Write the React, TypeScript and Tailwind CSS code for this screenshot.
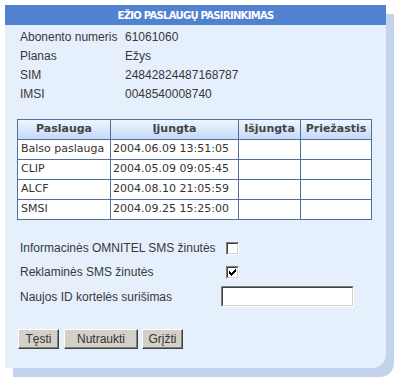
import React from "react";

const services = [
  { name: "Balso paslauga", on: "2004.06.09 13:51:05" },
  { name: "CLIP", on: "2004.05.09 09:05:45" },
  { name: "ALCF", on: "2004.08.10 21:05:59" },
  { name: "SMSI", on: "2004.09.25 15:25:00" },
];

const info = [
  ["Abonento numeris", "61061060"],
  ["Planas", "Ežys"],
  ["SIM", "24842824487168787"],
  ["IMSI", "0048540008740"],
];

const Checkbox = ({ checked }: { checked?: boolean }) => (
  <div className="ml-[5px] flex h-[13px] w-[13px] items-center justify-center border border-t-[#808080] border-l-[#808080] border-r-white border-b-white">
    <div className="flex h-[11px] w-[11px] items-center justify-center border border-t-[#404040] border-l-[#404040] border-r-[#d4d0c8] border-b-[#d4d0c8] bg-white">
      {checked && (
        <svg width="7" height="7" viewBox="0 0 7 7">
          <path d="M0 2h1v1h1v1h1V3h1V2h1V1h1V0h1v3H6v1H5v1H4v1H3v1H2V6H1V5H0z" fill="#000" />
        </svg>
      )}
    </div>
  </div>
);

const Button = ({ label, width }: { label: string; width: string }) => (
  <button
    type="button"
    className={`${width} h-[20px] border border-t-white border-l-white border-r-[#404040] border-b-[#404040] bg-[#d4d0c8] text-[12px] leading-none text-[#333] shadow-[inset_-1px_-1px_0_#808080]`}
  >
    {label}
  </button>
);

export default function App() {
  return (
    <div className="h-[385px] w-[401px] bg-white pt-[5px] pl-[5px] font-['Liberation_Sans',Arial,sans-serif] text-[12px] text-[#383838]">
      <div className="flex h-[363px] w-[381px] flex-col rounded-br-[14px] bg-[#e6f0fd] shadow-[8px_9px_0_#c3d3eb]">
        <div className="flex h-[20px] items-center justify-center bg-[#5182d1] font-['DejaVu_Sans',Verdana,sans-serif] text-[10px] font-bold tracking-[-0.7px] text-white">
          EŽIO PASLAUGŲ PASIRINKIMAS
        </div>

        <div className="pt-[2px] pl-[15px]">
          {info.map(([label, value]) => (
            <div key={label} className="flex h-[19px] items-center">
              <div className="w-[105px]">{label}</div>
              <div>{value}</div>
            </div>
          ))}
        </div>

        <table className="mt-[16px] ml-[12px] w-[355px] border-collapse font-['DejaVu_Sans',Verdana,sans-serif] text-[11px] text-[#333]">
          <thead>
            <tr className="h-[20px] bg-gradient-to-b from-[#eef5ff] to-[#c3d8f7]">
              <th className="w-[93px] border border-[#50709a] font-bold text-[#444]">Paslauga</th>
              <th className="w-[128px] border border-[#50709a] font-bold text-[#444]">Įjungta</th>
              <th className="w-[62px] border border-[#50709a] font-bold text-[#444]">Išjungta</th>
              <th className="border border-[#50709a] font-bold text-[#444]">Priežastis</th>
            </tr>
          </thead>
          <tbody>
            {services.map((s) => (
              <tr key={s.name} className="h-[20px] bg-white">
                <td className="border border-[#50709a] pl-[3px] whitespace-nowrap">{s.name}</td>
                <td className="border border-[#50709a] pl-[2px] whitespace-nowrap">{s.on}</td>
                <td className="border border-[#50709a]"></td>
                <td className="border border-[#50709a]"></td>
              </tr>
            ))}
          </tbody>
        </table>

        <div className="mt-[16px] pl-[15px]">
          <div className="flex h-[24px] items-center">
            <div className="w-[201px]">Informacinės OMNITEL SMS žinutės</div>
            <Checkbox />
          </div>
          <div className="flex h-[24px] items-center">
            <div className="w-[201px]">Reklaminės SMS žinutės</div>
            <Checkbox checked />
          </div>
          <div className="flex h-[25px] items-center">
            <div className="w-[201px]">Naujos ID kortelės surišimas</div>
            <div className="h-[21px] w-[133px] border border-t-[#808080] border-l-[#808080] border-r-white border-b-white">
              <div className="h-full w-full border border-t-[#404040] border-l-[#404040] border-r-[#d4d0c8] border-b-[#d4d0c8] bg-white" />
            </div>
          </div>
        </div>

        <div className="mt-[20px] flex pl-[13px]">
          <Button label="Tęsti" width="w-[41px]" />
          <div className="w-[5px]" />
          <Button label="Nutraukti" width="w-[74px]" />
          <div className="w-[4px]" />
          <Button label="Grįžti" width="w-[41px]" />
        </div>
      </div>
    </div>
  );
}
